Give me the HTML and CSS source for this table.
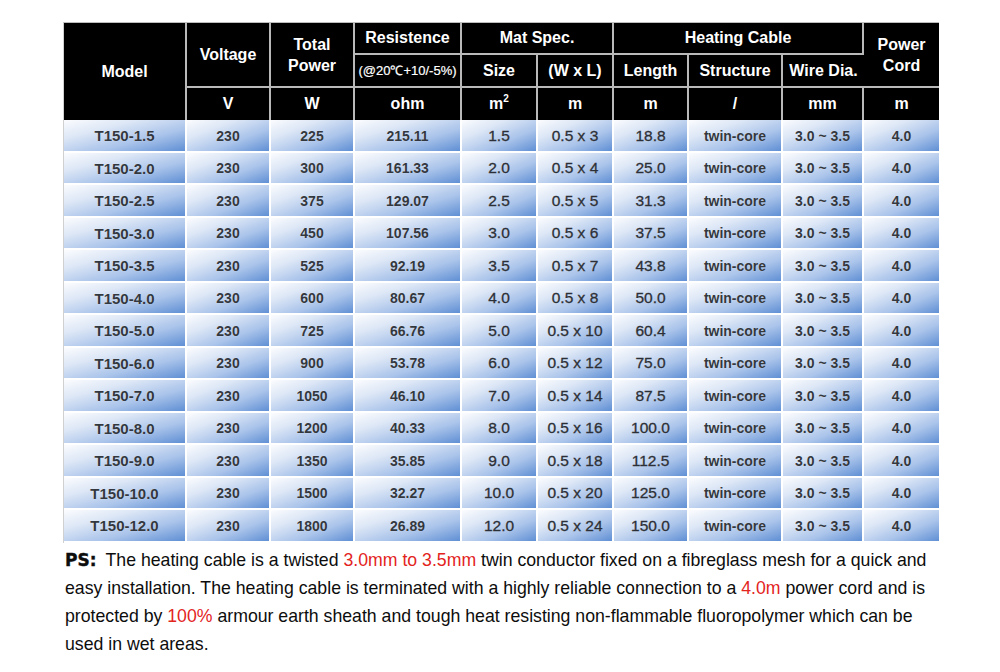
FILE: index.html
```html
<!DOCTYPE html>
<html>
<head>
<meta charset="utf-8">
<link rel="stylesheet" href="styles.css">
</head>
<body>
<div class="page">
<table class="spec">
  <colgroup>
    <col class="w-model"><col class="w-volt"><col class="w-power"><col class="w-res">
    <col class="w-size"><col class="w-wl"><col class="w-len"><col class="w-struct">
    <col class="w-dia"><col class="w-cord">
  </colgroup>
  <thead>
    <tr class="h1">
      <th rowspan="3">Model</th>
      <th rowspan="2">Voltage</th>
      <th rowspan="2" class="two">Total<br>Power</th>
      <th>Resistence</th>
      <th colspan="2">Mat Spec.</th>
      <th colspan="3">Heating Cable</th>
      <th rowspan="2" class="two">Power<br>Cord</th>
    </tr>
    <tr class="h2">
      <th class="small">(@20℃+10/-5%)</th>
      <th>Size</th>
      <th>(W x L)</th>
      <th>Length</th>
      <th>Structure</th>
      <th>Wire Dia.</th>
    </tr>
    <tr class="h3">
      <th>V</th><th>W</th><th>ohm</th><th>m<sup>2</sup></th><th>m</th><th>m</th><th>/</th><th>mm</th><th>m</th>
    </tr>
  </thead>
  <tbody>
    <tr><td class="model">T150-1.5</td><td>230</td><td>225</td><td>215.11</td><td class="mat">1.5</td><td class="mat">0.5 x 3</td><td class="mat">18.8</td><td>twin-core</td><td>3.0 ~ 3.5</td><td>4.0</td></tr>
    <tr><td class="model">T150-2.0</td><td>230</td><td>300</td><td>161.33</td><td class="mat">2.0</td><td class="mat">0.5 x 4</td><td class="mat">25.0</td><td>twin-core</td><td>3.0 ~ 3.5</td><td>4.0</td></tr>
    <tr><td class="model">T150-2.5</td><td>230</td><td>375</td><td>129.07</td><td class="mat">2.5</td><td class="mat">0.5 x 5</td><td class="mat">31.3</td><td>twin-core</td><td>3.0 ~ 3.5</td><td>4.0</td></tr>
    <tr><td class="model">T150-3.0</td><td>230</td><td>450</td><td>107.56</td><td class="mat">3.0</td><td class="mat">0.5 x 6</td><td class="mat">37.5</td><td>twin-core</td><td>3.0 ~ 3.5</td><td>4.0</td></tr>
    <tr><td class="model">T150-3.5</td><td>230</td><td>525</td><td>92.19</td><td class="mat">3.5</td><td class="mat">0.5 x 7</td><td class="mat">43.8</td><td>twin-core</td><td>3.0 ~ 3.5</td><td>4.0</td></tr>
    <tr><td class="model">T150-4.0</td><td>230</td><td>600</td><td>80.67</td><td class="mat">4.0</td><td class="mat">0.5 x 8</td><td class="mat">50.0</td><td>twin-core</td><td>3.0 ~ 3.5</td><td>4.0</td></tr>
    <tr><td class="model">T150-5.0</td><td>230</td><td>725</td><td>66.76</td><td class="mat">5.0</td><td class="mat">0.5 x 10</td><td class="mat">60.4</td><td>twin-core</td><td>3.0 ~ 3.5</td><td>4.0</td></tr>
    <tr><td class="model">T150-6.0</td><td>230</td><td>900</td><td>53.78</td><td class="mat">6.0</td><td class="mat">0.5 x 12</td><td class="mat">75.0</td><td>twin-core</td><td>3.0 ~ 3.5</td><td>4.0</td></tr>
    <tr><td class="model">T150-7.0</td><td>230</td><td>1050</td><td>46.10</td><td class="mat">7.0</td><td class="mat">0.5 x 14</td><td class="mat">87.5</td><td>twin-core</td><td>3.0 ~ 3.5</td><td>4.0</td></tr>
    <tr><td class="model">T150-8.0</td><td>230</td><td>1200</td><td>40.33</td><td class="mat">8.0</td><td class="mat">0.5 x 16</td><td class="mat">100.0</td><td>twin-core</td><td>3.0 ~ 3.5</td><td>4.0</td></tr>
    <tr><td class="model">T150-9.0</td><td>230</td><td>1350</td><td>35.85</td><td class="mat">9.0</td><td class="mat">0.5 x 18</td><td class="mat">112.5</td><td>twin-core</td><td>3.0 ~ 3.5</td><td>4.0</td></tr>
    <tr><td class="model">T150-10.0</td><td>230</td><td>1500</td><td>32.27</td><td class="mat">10.0</td><td class="mat">0.5 x 20</td><td class="mat">125.0</td><td>twin-core</td><td>3.0 ~ 3.5</td><td>4.0</td></tr>
    <tr><td class="model">T150-12.0</td><td>230</td><td>1800</td><td>26.89</td><td class="mat">12.0</td><td class="mat">0.5 x 24</td><td class="mat">150.0</td><td>twin-core</td><td>3.0 ~ 3.5</td><td>4.0</td></tr>
  </tbody>
</table>
<p class="note"><span class="ps">PS:</span>The heating cable is a twisted <span class="red">3.0mm to 3.5mm</span> twin conductor fixed on a fibreglass mesh for a quick and<br>easy installation. The heating cable is terminated with a highly reliable connection to a <span class="red">4.0m</span> power cord and is<br>protected by <span class="red">100%</span> armour earth sheath and tough heat resisting non-flammable fluoropolymer which can be<br>used in wet areas.</p>
</div>
</body>
</html>
```
FILE: styles.css
```css
html, body {
  margin: 0;
  padding: 0;
  background: #ffffff;
}
body {
  font-family: "Liberation Sans", Arial, sans-serif;
}
.page {
  padding: 22px 0 0 63px;
}
.spec {
  width: 875px;
  table-layout: fixed;
  border-collapse: separate;
  border-spacing: 0;
  border-top: 1px solid #bdbdbd;
  border-left: 1px solid #d0d0d0;
}
.w-model { width: 123px; }
.w-volt { width: 84px; }
.w-power { width: 84px; }
.w-res { width: 107px; }
.w-size { width: 76px; }
.w-wl { width: 76px; }
.w-len { width: 75px; }
.w-struct { width: 94px; }
.w-dia { width: 81px; }
.w-cord { width: 75px; }

.spec th {
  background: #000000;
  color: #ffffff;
  font-weight: bold;
  font-size: 16px;
  padding: 0;
  text-align: center;
  vertical-align: middle;
  border-right: 2px solid #b9b9b9;
  border-bottom: 2px solid #b9b9b9;
  line-height: 20px;
}
.spec th:last-child { border-right: 0; }
.spec .h3 th { border-bottom: 0; }
.spec thead th[rowspan="3"] { border-bottom: 0; }
.spec .h1 { height: 32px; }
.spec .h2 { height: 33px; }
.spec .h3 { height: 32px; }
.spec th.small {
  font-size: 13px;
  font-weight: normal;
  -webkit-text-stroke: 0.2px #ffffff;
}
.spec th.two { line-height: 21px; }
.spec sup {
  font-size: 10px;
  line-height: 0;
  position: relative;
  top: -1px;
}

.spec td {
  height: 30px;
  padding: 0;
  text-align: center;
  vertical-align: middle;
  font-size: 14px;
  font-weight: bold;
  color: #33383f;
  border-right: 2px solid #ffffff;
  border-bottom: 2px solid #ffffff;
  background: linear-gradient(to bottom right, #fbfcfe 0%, #dde7f6 30%, #a9c3ea 65%, #5f8fd4 100%);
  text-shadow: 0 0 1px rgba(255,255,255,0.6);
}
.spec tbody tr:nth-child(odd) td { height: 31px; }
.spec td:last-child { border-right: 0; }
.spec td.model { font-size: 15px; }
.spec td.mat {
  font-size: 15.5px;
  font-weight: normal;
  color: #2b3038;
  -webkit-text-stroke: 0.35px #2b3038;
}

.note {
  margin: 3px 0 0 2px;
  font-size: 17.7px;
  line-height: 28px;
  color: #0d0d0d;
  white-space: nowrap;
}
.ps {
  font-family: "DejaVu Sans", sans-serif;
  font-weight: bold;
  font-size: 17px;
  -webkit-text-stroke: 0.4px #111;
  margin-right: 9px;
}
.red { color: #e3241d; }
```
